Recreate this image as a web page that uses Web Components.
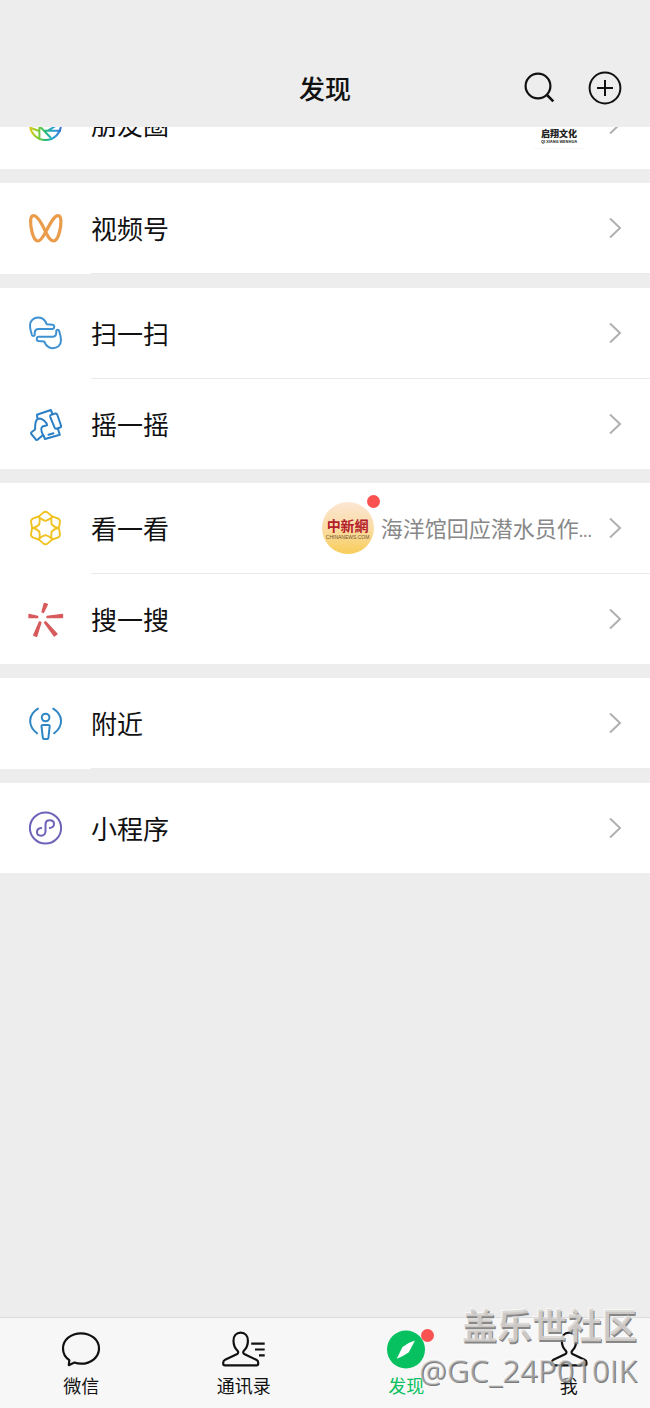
<!DOCTYPE html>
<html lang="zh-CN">
<head>
<meta charset="utf-8">
<meta name="viewport" content="width=device-width, initial-scale=1">
<title>发现</title>
<style>
  body {
    margin: 0;
    background: #ededed;
    color: #111;
    font-family: "Noto Sans CJK SC", "Noto Sans", sans-serif;
  }
</style>
</head>
<body>
<discover-page></discover-page>

<script>
const define = (name, html, setup) => {
  const template = document.createElement('template');
  template.innerHTML = html;
  customElements.define(name, class extends HTMLElement {
    constructor() {
      super();
      this.attachShadow({ mode: 'open' }).append(template.content.cloneNode(true));
    }
    connectedCallback() {
      if (setup && !this.ready) setup(this, this.shadowRoot);
      this.ready = true;
    }
  });
};

const makeIcon = name => {
  const icon = document.createElement('ui-icon');
  icon.setAttribute('name', name);
  return icon;
};

const person = 'M0 2.700C-4.600 2.700-7.200 6.100-7.200 10.700C-7.200 14.700-5.900 18-3.400 20.500C-2 22-2.300 23.500-4 24.300L-15.600 29.800C-17 30.500-17.500 31.300-17.500 32.800V33.500Q-17.500 35.300-15.900 35.300H15.900Q17.500 35.300 17.500 33.500V32.800C17.500 31.300 17 30.500 15.600 29.800L4 24.300C2.300 23.500 2 22 3.400 20.500C5.900 18 7.200 14.700 7.200 10.700C7.200 6.100 4.600 2.700 0 2.700Z';
const hand = 'M4.900 20C4.200 17 3 14.500 3 10.500C3 5.500 6.500 2.600 11.500 2.600C16 2.600 18 5 19.800 9.300L25.500 9.700C27.800 10 27.800 13.700 25.500 14H11.500C8.800 14 7.800 15.500 7.700 18V20C7.400 21.300 5.400 21.300 4.900 20Z';
const petal = 'M-6.600-11.600L-2.200-15.400Q0-17 2.200-15.400L6.600-11.600C5.500-9 3-8.300 0-7.200C-3-8.300-5.500-9-6.600-11.600Z';

// Each entry: [box size, markup]
const icons = {
  search: [36, '<g fill="none" stroke="#111" stroke-width="2.200"><circle cx="17" cy="16" r="12.400"/><path d="M25.500 24.500l6.800 6.800" stroke-width="2.600"/></g>'],
  add: [36, '<g fill="none" stroke="#111" stroke-width="2"><circle cx="18" cy="18" r="15.400"/><path d="M18 10v16M10 18h16"/></g>'],
  moments: [36, '<defs><linearGradient id="m" x1="2" x2="35" y1="20" y2="20" gradientUnits="userSpaceOnUse"><stop stop-color="#e8c81c"/><stop offset=".25" stop-color="#8ccf2c"/><stop offset=".5" stop-color="#25b978"/><stop offset=".75" stop-color="#2a9edb"/><stop offset="1" stop-color="#3a6fd0"/></linearGradient></defs><g fill="none" stroke="url(#m)" stroke-width="2"><circle cx="18.500" cy="18.500" r="15.500"/><path d="M12.400 11v21M12 19.500l12 12.500M18 24.700h16M30 19l-9 5.700M4 22l8 3M12 11l13-7M25 4v10"/></g>'],
  channels: [36, '<path fill="none" stroke="#eb9c4b" stroke-width="3.200" stroke-linejoin="round" d="M18.700 22C15 14 10 5.700 6.500 5.700C2.500 5.700 3.300 15 5 22C6.500 28 8.500 31 11 31C13.500 31 16 27 18.700 22C23 14 27 5.700 31 5.700C35 5.700 34.300 15 32.500 22C31 28 29 31 26.500 31C23.500 31 21 27 18.700 22Z"/>'],
  scan: [36, `<g fill="none" stroke="#3f92d2" stroke-width="2" stroke-linejoin="round"><path d="${hand}"/><path transform="rotate(180 18.500 17.900)" d="${hand}"/></g>`],
  shake: [36, '<g fill="none" stroke="#2b7fc4" stroke-width="2" stroke-linejoin="round" stroke-linecap="round"><path d="M10.200 11.500L10 8.800L23.800 4L25.300 7.700M31 23l1.800 5.700L18 33L16.500 29.500"/><path d="M24.200 8.800L28.300 7.500Q29.800 7.200 30.300 8.700L34 19.500Q34.500 21 33 21.500L29.500 22.700Q28.200 23 27.600 21.600L23.200 10.800Q22.800 9.300 24.200 8.800Z"/><path d="M12 12.500C8.500 13 8.300 17 8 23.500L4.200 26.500Q3.700 27.200 4.300 28L9 33.700Q9.800 34.300 10.500 33.800L16 29C14 25 13.500 22 15.500 20.500L20 19.300C20 16 15.500 12.500 12 12.500ZM21.500 28.700l5-1.500"/></g>'],
  look: [36, `<g fill="none" stroke="#f0c220" stroke-width="1.900" stroke-linejoin="round" transform="translate(18.500 18)">${[0, 60, 120, 180, 240, 300].map(a => `<path transform="rotate(${a})" d="${petal}"/>`).join('')}</g>`],
  spark: [36, '<path fill="#d75a5c" stroke="#d75a5c" stroke-width="1.300" stroke-linejoin="round" d="M17.300 2.500L20.500 3.300L16.500 11.500L15 11ZM35.500 13.400V16.500L20 16.500V15.300ZM2 13.400L10.700 15.300V16.500L2 16.700ZM6.700 34.300L12.500 20.800L14 21.300L9.700 35.300ZM17.500 21.500L18.700 20.700L30 33L27.300 35Z"/>'],
  nearby: [36, '<g fill="none" stroke="#2f86c5" stroke-width="2" stroke-linecap="round" stroke-linejoin="round"><path d="M11 3.700C.7 10 .7 21 10 28.300M26.200 3.700C36.500 10 36.500 21 27.200 28.300"/><circle cx="18.600" cy="12.500" r="3.800"/><path d="M15.700 20H21.500Q22.800 20 22.700 21.300L21.400 33Q21.300 34 20.300 34H17Q16 34 15.900 33L14.500 21.300Q14.400 20 15.700 20Z"/></g>'],
  mini: [36, '<g fill="none" stroke="#6d63b8" stroke-width="2" stroke-linecap="round"><circle cx="18.500" cy="18" r="15.600"/><path d="M14.200 18C8.500 18.700 8.700 25.700 14 25.700C17 25.700 18.500 23.500 18.500 21.300V14.700C18.500 12 20.200 10.300 22.800 10.300C28.300 10.300 28.500 17.300 22.800 18"/></g>'],
  chat: [40, '<path fill="none" stroke="#111" stroke-width="2.200" stroke-linejoin="round" d="M20 3.300C9.800 3.300 2 10 2 18.500C2 23.500 4.500 27.500 8.300 30.200L7.800 35.200L13.500 32.500C15.500 33.300 17.700 33.700 20 33.700C30.200 33.700 38 27 38 18.500C38 10 30.200 3.300 20 3.300Z"/>'],
  contacts: [40, `<g fill="none" stroke="#111" stroke-width="2.200"><path transform="translate(16.700 0)" d="${person}"/><path d="M27.200 13.700h13.500M31 19.500h9.700M35 25.300h5.700"/></g>`],
  compass: [40, '<circle cx="20" cy="19.500" r="19" fill="#07c160"/><path fill="#fff" d="M29 10.500L22.800 22.300Q16.500 27 10.700 28.700L16.500 17Q22.500 12.300 29 10.500Z"/>'],
  me: [40, `<path fill="none" stroke="#111" stroke-width="2.200" transform="translate(20 0)" d="${person}"/>`],
};

define('ui-icon', `
  <style>
    :host { display: block; flex: none; }
    svg { display: block; overflow: visible; }
  </style>
`, (host, root) => {
  const [size, art] = icons[host.getAttribute('name')];
  root.innerHTML += `<svg width="${size}" height="${size}" viewBox="0 0 ${size} ${size}" aria-hidden="true">${art}</svg>`;
});

define('nav-header', `
  <style>
    :host { display: block; background: #ededed; }
    header {
      display: grid; grid-template-columns: 1fr auto 1fr; align-items: center;
      padding: 68px 27px 19px;
    }
    h1 { grid-column: 2; margin: 0; font-size: 26px; line-height: 40px; font-weight: 500; }
    .actions { display: flex; justify-content: flex-end; gap: 30px; }
    button { padding: 0; border: 0; background: none; }
  </style>
  <header>
    <h1><slot></slot></h1>
    <div class="actions">
      <button aria-label="搜索"><ui-icon name="search"></ui-icon></button>
      <button aria-label="添加"><ui-icon name="add"></ui-icon></button>
    </div>
  </header>
`);

define('menu-group', `
  <style>
    :host { display: flex; flex-direction: column; background: #fff; }
    :host([scrolled]) { height: 42px; justify-content: flex-end; overflow: hidden; }
  </style>
  <slot></slot>
`);

define('menu-row', `
  <style>
    :host { display: block; flex: none; }
    a {
      display: flex; align-items: center; height: 90px; padding: 0 28px 0 27px;
      color: inherit; text-decoration: none;
    }
    .body {
      flex: 1; min-width: 0; display: flex; align-items: center; justify-content: space-between;
      margin-left: 28px;
    }
    .label { font-size: 26px; line-height: 40px; white-space: nowrap; }
    .chevron { flex: none; width: 14px; height: 22px; margin-left: 16px; }
    :host([divided])::after { content: ""; display: block; height: 1px; margin-left: 91px; background: #ebebeb; }
  </style>
  <a href="#">
    <span class="body"><span class="label"></span><slot></slot></span>
    <svg class="chevron" viewBox="0 0 14 22" aria-hidden="true"><path d="M2 1.500L12 11L2 20.500" fill="none" stroke="#b0b0b0" stroke-width="2"/></svg>
  </a>
`, (host, root) => {
  root.querySelector('a').prepend(makeIcon(host.getAttribute('icon')));
  root.querySelector('.label').textContent = host.getAttribute('label');
});

define('culture-logo', `
  <style>
    :host {
      display: flex; flex-direction: column; justify-content: center; align-items: center; box-sizing: border-box;
      width: 50px; height: 50px; padding-top: 24px; margin-right: 8px;
      border-bottom: 1px solid #f7f7f7; white-space: nowrap; color: #222; font-weight: 700;
    }
    b { font-size: 9px; line-height: 10px; }
    small { font-size: 4px; line-height: 4px; }
  </style>
  <b>启翔文化</b><small>QI XIANG WENHUA</small>
`);

define('news-teaser', `
  <style>
    :host { display: flex; align-items: center; gap: 7px; color: #888; font-size: 22px; line-height: 32px; white-space: nowrap; }
    .avatar {
      position: relative; display: flex; flex-direction: column; align-items: center; justify-content: center;
      width: 52px; height: 52px; border-radius: 50%; background: linear-gradient(#fbe6d2, #fbdca6 50%, #f8cd58);
    }
    .avatar b { font-size: 14px; line-height: 18px; color: #b3202a; font-weight: 700; }
    .avatar small { font: 5px/6px "Liberation Sans", sans-serif; color: #6d5530; }
    .dot { position: absolute; top: -7px; right: -6px; width: 13px; height: 13px; border-radius: 50%; background: #fa5151; }
    .dots { font-size: 16px; }
  </style>
  <span class="avatar"><b>中新網</b><small>CHINANEWS.COM</small><i class="dot"></i></span>
  <span>海洋馆回应潜水员作<span class="dots">...</span></span>
`);

define('tab-item', `
  <style>
    :host { display: block; flex: 1; }
    a { display: flex; flex-direction: column; align-items: center; gap: 3px; padding: 12px 0 11px; color: #111; text-decoration: none; }
    .icon { position: relative; }
    .label { font-size: 18px; line-height: 24px; }
    .dot { display: none; position: absolute; top: -1px; right: -8px; width: 13px; height: 13px; border-radius: 50%; background: #fa5151; }
    :host([active]) a { color: #07c160; }
    :host([active]) .dot { display: block; }
  </style>
  <a href="#"><span class="icon"><i class="dot"></i></span><span class="label"><slot></slot></span></a>
`, (host, root) => {
  root.querySelector('.icon').prepend(makeIcon(host.getAttribute('icon')));
});

define('tab-bar', `
  <style>
    :host { display: block; background: #f7f7f7; border-top: 1px solid #dcdcdc; }
    nav { display: flex; }
  </style>
  <nav><slot></slot></nav>
`);

define('community-mark', `
  <style>
    :host {
      position: absolute; right: 13px; bottom: 16px; display: flex; flex-direction: column; align-items: flex-end;
      white-space: nowrap; pointer-events: none;
    }
    b { font-size: 35px; line-height: 48px; color: rgba(216, 213, 210, .85); text-shadow: 1px 2px 0 rgba(115, 115, 115, .85), -1px -1px 0 rgba(255, 255, 255, .6); }
    span {
      font: 31px/44px "Open Sans", sans-serif; color: rgba(190, 190, 190, .55);
      text-shadow: 1px 1px 0 rgba(100, 100, 100, .85), -1px -1px 0 rgba(255, 255, 255, .5);
    }
  </style>
  <b>盖乐世社区</b><span>@GC_24P010IK</span>
`);

define('discover-page', `
  <style>
    :host { position: relative; display: flex; flex-direction: column; min-height: 100vh; }
    main { flex: 1; display: flex; flex-direction: column; gap: 14px; }
  </style>
  <nav-header>发现</nav-header>
  <main>
    <menu-group scrolled><menu-row icon="moments" label="朋友圈"><culture-logo></culture-logo></menu-row></menu-group>
    <menu-group><menu-row divided icon="channels" label="视频号"></menu-row></menu-group>
    <menu-group>
      <menu-row divided icon="scan" label="扫一扫"></menu-row>
      <menu-row icon="shake" label="摇一摇"></menu-row>
    </menu-group>
    <menu-group>
      <menu-row divided icon="look" label="看一看"><news-teaser></news-teaser></menu-row>
      <menu-row icon="spark" label="搜一搜"></menu-row>
    </menu-group>
    <menu-group><menu-row divided icon="nearby" label="附近"></menu-row></menu-group>
    <menu-group><menu-row icon="mini" label="小程序"></menu-row></menu-group>
  </main>
  <tab-bar>
    <tab-item icon="chat">微信</tab-item>
    <tab-item icon="contacts">通讯录</tab-item>
    <tab-item icon="compass" active>发现</tab-item>
    <tab-item icon="me">我</tab-item>
  </tab-bar>
  <community-mark></community-mark>
`);
</script>
</body>
</html>
